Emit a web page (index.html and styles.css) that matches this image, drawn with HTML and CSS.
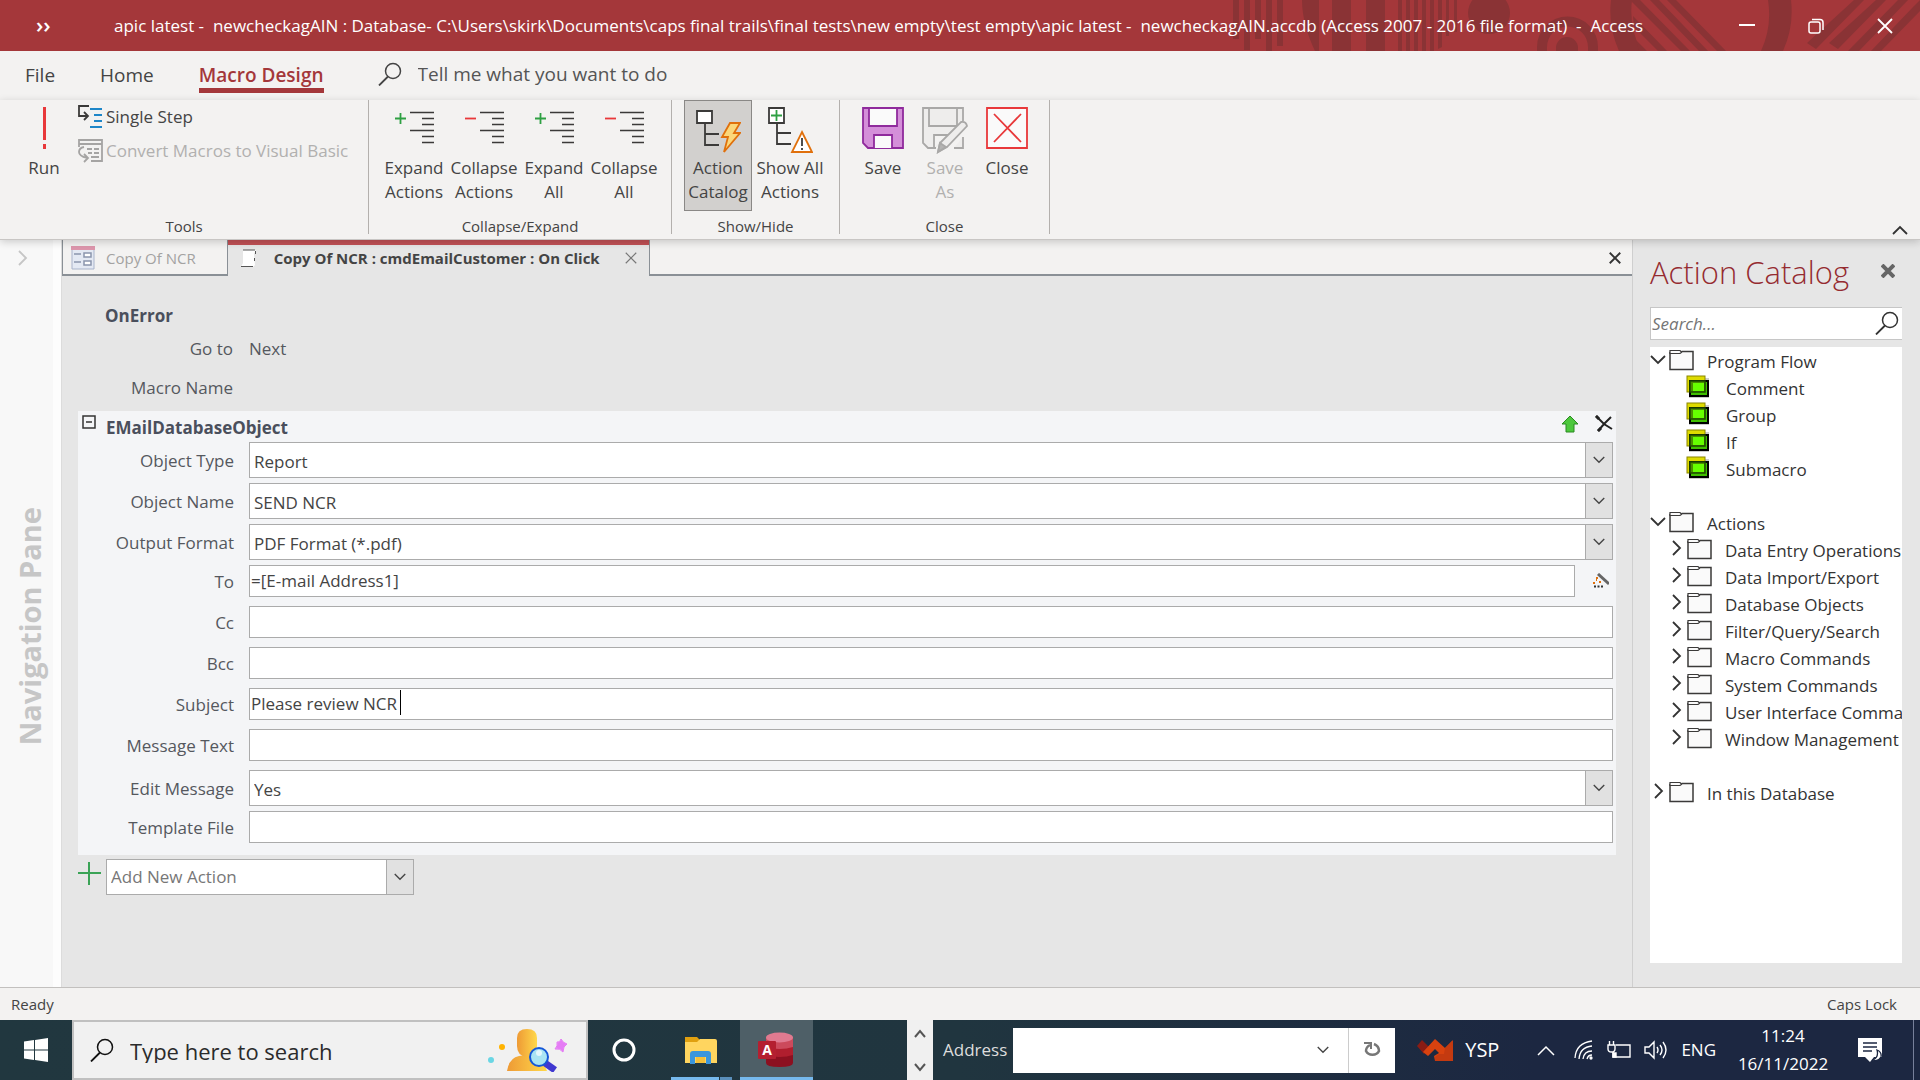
FILE: index.html
```html
<!DOCTYPE html>
<html lang="en">
<head>
    <meta charset="UTF-8">
    <meta name="viewport" content="width=device-width, initial-scale=1.0">
    <title>Access - Macro Design</title>
    <link rel="stylesheet" href="styles.css">
</head>
<body>
    <!-- shared icons -->
    <svg class="defs" width="0" height="0">
        <symbol id="i-lines" viewBox="0 0 41 42">
            <path d="M16 5.5h24M28 11.5h12M28 17.5h12M16 23.5h24M28 29.5h12M28 35.5h12" fill="none" stroke="#3b3a39" stroke-width="1.6"/>
        </symbol>
        <symbol id="i-folder" viewBox="0 0 25 22">
            <path d="M1 3.500H12L13 2.500H24V20.500H1Z" fill="#fafafa" stroke="#3b3a39" stroke-width="1.500"/>
            <path d="M1 1.500H11L12.500 3L11 4.500H1Z" fill="#fafafa" stroke="#3b3a39" stroke-width="1.200"/>
        </symbol>
        <symbol id="i-block" viewBox="0 0 24 24">
            <rect x="3" y="3" width="20" height="20" fill="#999" opacity=".5"/>
            <rect x="1" y="1" width="18" height="16" fill="#dedb00" stroke="#8a8600"/>
            <rect x="4" y="6" width="18" height="15" fill="#3fbf00" stroke="#000" stroke-width="2"/>
            <rect x="4" y="6" width="15" height="11" fill="#4a8f00" stroke="#1f4a00" stroke-width="1.500"/>
            <rect x="7" y="8" width="11" height="8" fill="#66ff00"/>
        </symbol>
        <symbol id="i-down" viewBox="0 0 16 10">
            <path d="M1 1l7 7 7-7" fill="none" stroke="currentColor" stroke-width="1.800"/>
        </symbol>
        <symbol id="i-right" viewBox="0 0 10 16">
            <path d="M1 1l7 7-7 7" fill="none" stroke="currentColor" stroke-width="1.800"/>
        </symbol>
        <symbol id="i-search" viewBox="0 0 24 24">
            <circle cx="15" cy="9" r="7.500" fill="none" stroke="currentColor" stroke-width="1.500"/>
            <path d="M10 14.500L1 23.500" stroke="currentColor" stroke-width="1.800"/>
        </symbol>
        <symbol id="i-cross" viewBox="0 0 16 16">
            <path d="M1 1l14 14M15 1L1 15" fill="none" stroke="currentColor"/>
        </symbol>
    </svg>

    <header class="titlebar">
        <svg class="pattern" width="700" height="51" viewBox="0 0 700 51" fill="#8a3335">
            <path d="M13 0h6v39h-6zM24 0h6v50h-6zM35 0h6v39h-6zM46 0h6v51h-6zM57 0h6v46h-6z"/>
            <path d="M82 0h17v51h-4C88 36 82 18 82 0zM112 0h19v51h-19zM146 0h19v51h-19z"/>
            <path d="M178 0h4v51h-4zM186 0h4v51h-4zM194 0h4v51h-4zM202 0h4v51h-4zM210 0h4v51h-4zM218 0h4v47l-4 2zM226 0h3v36h-3zM234 0h3v32h-3z"/>
            <circle cx="269" cy="13" r="21"/>
            <path d="M317 51v-4a30 30 0 0 1 61 0v4h-10v-4a20 20 0 0 0-41 0v4zM336 51v-3a11 11 0 0 1 22 0v3z"/>
            <path d="M391 0a96 96 0 0 0 8 51h22a88 88 0 0 1-9-51zM548 0a88 88 0 0 1-7 51h22a96 96 0 0 0 8-51z"/>
            <path d="M412 0h8l50 51h-9l-49-49zM430 0h9l49 51h-9zM447 0h9l50 51h-9zM413 16l34 35h-9L414 27zM416 40l11 11h-8z"/>
            <path d="M634 0h10l-48 49-9-6zM656 0h10l-48 49-9-6zM678 0h10l-49 51h-11zM694 6l6-6v11l-39 40h-10z"/>
        </svg>
        <button class="more" aria-label="More commands">&#8250;&#8250;</button>
        <h1>apic latest -&nbsp; newcheckagAIN : Database- C:\Users\skirk\Documents\caps final trails\final tests\new empty\test empty\apic latest -&nbsp; newcheckagAIN.accdb (Access 2007 - 2016 file format)&nbsp; -&nbsp; Access</h1>
        <div class="window-buttons">
            <button aria-label="Minimize"><svg width="16" height="16"><path d="M0 7h16" stroke="#fff" stroke-width="2"/></svg></button>
            <button aria-label="Restore"><svg width="16" height="16" fill="none" stroke="#fff" stroke-width="1.500"><rect x="1" y="4" width="11" height="11" rx="2"/><path d="M4 1.500h8q3 0 3 3V12"/></svg></button>
            <button aria-label="Close window"><svg width="16" height="16" stroke-width="1.800"><use href="#i-cross"/></svg></button>
        </div>
    </header>

    <nav class="ribbon-tabs">
        <a href="#">File</a>
        <a href="#">Home</a>
        <a href="#" class="active">Macro Design</a>
        <label class="tell-me">
            <svg width="24" height="24"><use href="#i-search"/></svg>
            <input type="text" placeholder="Tell me what you want to do">
        </label>
    </nav>

    <section class="ribbon">
        <div class="group tools">
            <div class="group-body">
                <button class="big run">
                    <svg width="41" height="42"><path d="M20.500 0v33M20.500 37v5" stroke="#e8383a" stroke-width="3"/></svg>
                    <span>Run</span>
                </button>
                <div class="small-buttons">
                    <button>
                        <svg width="25" height="24" fill="none" stroke-width="1.800"><path d="M11 1H1v10h8M6 7l4 4-4 4" stroke="#3b3a39"/><path d="M12 4h12M16 10h8M16 16h8M12 22h12" stroke="#1e86c8"/></svg>
                        Single Step
                    </button>
                    <button disabled>
                        <svg width="25" height="24" fill="none" stroke="#a5a4a3" stroke-width="1.800"><path d="M1 8V1h23v21H13M1 5h23M9 10h5M16 10h5M10 14h4M16 14h5M13 18h8"/><path d="M6 8q-5 1-5 5t8 6M6 15l4 4-4 4"/></svg>
                        Convert Macros to Visual Basic
                    </button>
                </div>
            </div>
            <div class="group-name">Tools</div>
        </div>
        <div class="group collapse">
            <div class="group-body">
                <button class="big">
                    <svg width="41" height="42"><use href="#i-lines" width="41" height="42"/><path d="M1 11.500h11M6.500 6v11" stroke="#2ea043" stroke-width="1.800"/></svg>
                    <span>Expand<br>Actions</span>
                </button>
                <button class="big">
                    <svg width="41" height="42"><use href="#i-lines" width="41" height="42"/><path d="M1 11.500h11" stroke="#e8383a" stroke-width="1.800"/></svg>
                    <span>Collapse<br>Actions</span>
                </button>
                <button class="big">
                    <svg width="41" height="42"><use href="#i-lines" width="41" height="42"/><path d="M1 11.500h11M6.500 6v11" stroke="#2ea043" stroke-width="1.800"/></svg>
                    <span>Expand<br>All</span>
                </button>
                <button class="big">
                    <svg width="41" height="42"><use href="#i-lines" width="41" height="42"/><path d="M1 11.500h11" stroke="#e8383a" stroke-width="1.800"/></svg>
                    <span>Collapse<br>All</span>
                </button>
            </div>
            <div class="group-name">Collapse/Expand</div>
        </div>
        <div class="group show-hide">
            <div class="group-body">
                <button class="big pressed">
                    <svg width="46" height="46" fill="none"><path d="M2 4h15v12H2zM10 16v22h14M10 27h14" stroke="#3b3a39" stroke-width="1.800"/><path d="M3 5h13v10H3z" fill="#fff"/><path d="M35 16h10l-6 10h6L29 45l4-15h-6z" fill="#fbd77a" stroke="#e0700c" stroke-width="1.800"/></svg>
                    <span>Action<br>Catalog</span>
                </button>
                <button class="big">
                    <svg width="46" height="46" fill="none"><path d="M2 1h15v15H2z" fill="#fff" stroke="#3b3a39" stroke-width="1.800"/><path d="M10 16v21h14M10 26h14" stroke="#3b3a39" stroke-width="1.800"/><path d="M4 8.500h11M9.500 3v11" stroke="#2ea043" stroke-width="1.800"/><path d="M35 25l10 20H25z" fill="#fff" stroke="#e0700c" stroke-width="1.800"/><path d="M35 31v8M35 41v2" stroke="#222" stroke-width="1.600"/></svg>
                    <span>Show All<br>Actions</span>
                </button>
            </div>
            <div class="group-name">Show/Hide</div>
        </div>
        <div class="group close-group">
            <div class="group-body">
                <button class="big">
                    <svg width="42" height="42" stroke="#8f2a9c" stroke-width="1.800"><path d="M1 1h40v40H6l-5-5z" fill="#d48fd9"/><path d="M7 1h28v18H7zM12 41V28h18v13" fill="#fafafa"/></svg>
                    <span>Save</span>
                </button>
                <button class="big" disabled>
                    <svg width="46" height="46" stroke="#a9a8a7" stroke-width="1.800" fill="none"><path d="M41 14V1H1v35l5 5h8M7 1v18h28V1M12 41V28h14M41 30v11h-9" fill="#eeedec"/><path d="M16 45l2-9 21-21q5-1 6 4L25 40z" fill="#eeedec"/><path d="M16 45l2-9 6 4z" fill="#b5b4b3"/></svg>
                    <span>Save<br>As</span>
                </button>
                <button class="big">
                    <svg width="42" height="42" stroke="#e8383a" stroke-width="1.800" fill="none"><path d="M1 1h40v40H1z" fill="#fafafa"/><path d="M8 7l27 28M35 7L8 35"/></svg>
                    <span>Close</span>
                </button>
            </div>
            <div class="group-name">Close</div>
        </div>
        <button class="collapse-ribbon" aria-label="Collapse the ribbon"><svg width="16" height="10"><path d="M1 9l7-7 7 7" fill="none" stroke="#333" stroke-width="1.800"/></svg></button>
    </section>

    <div class="workspace">
        <aside class="nav-pane">
            <button aria-label="Open navigation pane"><svg width="10" height="16"><use href="#i-right"/></svg></button>
            <span>Navigation Pane</span>
        </aside>

        <main>
            <div class="doc-tabs">
                <a href="#" class="doc-tab">
                    <svg width="24" height="24"><path d="M1 1h22v22H1z" fill="#e4e9f3" stroke="#a9b3ca"/><path d="M0 0h24v4H0z" fill="#dd96ac"/><path d="M3 8h7M3 16h7" stroke="#8b95ad" stroke-width="1.500"/><path d="M13 7h7v4h-7zM13 15h7v4h-7z" fill="#fff" stroke="#8b95ad" stroke-width="1.500"/></svg>
                    Copy Of NCR
                </a>
                <a href="#" class="doc-tab current">
                    <svg width="18" height="20"><path d="M3 2h13l-2 4 1 11-2 2H1l2-4z" fill="#fff"/><path d="M3 2h12M1 18.500h12M15.500 3v3M14.500 10v3" stroke="#555"/></svg>
                    Copy Of NCR : cmdEmailCustomer : On Click
                    <svg class="tab-x" width="12" height="12" stroke-width="1.500"><use href="#i-cross"/></svg>
                </a>
                <button class="doc-close" aria-label="Close document"><svg width="12" height="12" stroke-width="2.500"><use href="#i-cross"/></svg></button>
            </div>

            <div class="macro">
                <h2 class="action-name">OnError</h2>
                <dl class="on-error">
                    <dt>Go to</dt><dd>Next</dd>
                    <dt>Macro Name</dt><dd></dd>
                </dl>

                <form class="action-block">
                    <div class="block-head">
                        <button type="button" class="toggle" aria-label="Collapse action"><svg width="14" height="14"><path d="M1 1h12v12H1zM4 7h6" fill="none" stroke="#333" stroke-width="1.500"/></svg></button>
                        <h2 class="action-name">EMailDatabaseObject</h2>
                        <button type="button" aria-label="Move up"><svg width="18" height="18"><path d="M9 1l8 8h-4v8H5V9H1z" fill="#4cc83c" stroke="#2b8a22"/></svg></button>
                        <button type="button" aria-label="Delete"><svg width="18" height="18"><path d="M1 1l8 8 8 5M16 2L9 9l-6 7" fill="none" stroke="#222" stroke-width="2"/><path d="M1 1l3 3M6 13l-3 3" stroke="#222" stroke-width="3"/></svg></button>
                    </div>
                    <div class="row combo">
                        <label for="objectType">Object Type</label>
                        <div class="field"><select id="objectType"><option>Report</option></select><span class="arrow"><svg width="12" height="8"><use href="#i-down"/></svg></span></div>
                    </div>
                    <div class="row combo">
                        <label for="objectName">Object Name</label>
                        <div class="field"><select id="objectName"><option>SEND NCR</option></select><span class="arrow"><svg width="12" height="8"><use href="#i-down"/></svg></span></div>
                    </div>
                    <div class="row combo">
                        <label for="outputFormat">Output Format</label>
                        <div class="field"><select id="outputFormat"><option>PDF Format (*.pdf)</option></select><span class="arrow"><svg width="12" height="8"><use href="#i-down"/></svg></span></div>
                    </div>
                    <div class="row">
                        <label for="to">To</label>
                        <div class="field"><input type="text" id="to" value="=[E-mail Address1]"><button type="button" class="builder" aria-label="Expression builder"><svg width="16" height="16"><path d="M5 1l11 10" stroke="#666" stroke-width="3"/><path d="M1 13.500h2M4.500 13.500h2M8 13.500h2" stroke="#333" stroke-width="2"/><path d="M3 5h2M0 10h2M6 9h2M3 7h1" stroke="#e0700c" stroke-width="2"/></svg></button></div>
                    </div>
                    <div class="row">
                        <label for="cc">Cc</label>
                        <div class="field"><input type="text" id="cc"></div>
                    </div>
                    <div class="row">
                        <label for="bcc">Bcc</label>
                        <div class="field"><input type="text" id="bcc"></div>
                    </div>
                    <div class="row">
                        <label for="subject">Subject</label>
                        <div class="field"><input type="text" id="subject" value="Please review NCR "><span class="caret"></span></div>
                    </div>
                    <div class="row">
                        <label for="message">Message Text</label>
                        <div class="field"><input type="text" id="message"></div>
                    </div>
                    <div class="row combo">
                        <label for="editMessage">Edit Message</label>
                        <div class="field"><select id="editMessage"><option>Yes</option></select><span class="arrow"><svg width="12" height="8"><use href="#i-down"/></svg></span></div>
                    </div>
                    <div class="row">
                        <label for="template">Template File</label>
                        <div class="field"><input type="text" id="template"></div>
                    </div>
                </form>

                <div class="add-action">
                    <svg width="24" height="24"><path d="M0 11h23M11 0v23" stroke="#3aa356" stroke-width="2"/></svg>
                    <div class="field"><select aria-label="Add New Action"><option>Add New Action</option></select><span class="arrow"><svg width="12" height="8"><use href="#i-down"/></svg></span></div>
                </div>
            </div>
        </main>

        <aside class="catalog">
            <div class="catalog-head">
                <h2>Action Catalog</h2>
                <button aria-label="Close Action Catalog"><svg width="14" height="14"><path d="M1 1l12 12M13 1L1 13" stroke="#666" stroke-width="4"/></svg></button>
            </div>
            <label class="catalog-search">
                <input type="text" placeholder="Search...">
                <svg width="24" height="24"><use href="#i-search"/></svg>
            </label>
            <ul class="tree">
                <li><svg class="chev" width="16" height="10"><use href="#i-down"/></svg><svg width="25" height="22"><use href="#i-folder"/></svg>Program Flow</li>
                <li class="leaf"><svg width="24" height="24"><use href="#i-block"/></svg>Comment</li>
                <li class="leaf"><svg width="24" height="24"><use href="#i-block"/></svg>Group</li>
                <li class="leaf"><svg width="24" height="24"><use href="#i-block"/></svg>If</li>
                <li class="leaf"><svg width="24" height="24"><use href="#i-block"/></svg>Submacro</li>
                <li class="gap"><svg class="chev" width="16" height="10"><use href="#i-down"/></svg><svg width="25" height="22"><use href="#i-folder"/></svg>Actions</li>
                <li class="child"><svg class="chev closed" width="16" height="16"><use href="#i-right"/></svg><svg width="25" height="22"><use href="#i-folder"/></svg>Data Entry Operations</li>
                <li class="child"><svg class="chev closed" width="16" height="16"><use href="#i-right"/></svg><svg width="25" height="22"><use href="#i-folder"/></svg>Data Import/Export</li>
                <li class="child"><svg class="chev closed" width="16" height="16"><use href="#i-right"/></svg><svg width="25" height="22"><use href="#i-folder"/></svg>Database Objects</li>
                <li class="child"><svg class="chev closed" width="16" height="16"><use href="#i-right"/></svg><svg width="25" height="22"><use href="#i-folder"/></svg>Filter/Query/Search</li>
                <li class="child"><svg class="chev closed" width="16" height="16"><use href="#i-right"/></svg><svg width="25" height="22"><use href="#i-folder"/></svg>Macro Commands</li>
                <li class="child"><svg class="chev closed" width="16" height="16"><use href="#i-right"/></svg><svg width="25" height="22"><use href="#i-folder"/></svg>System Commands</li>
                <li class="child"><svg class="chev closed" width="16" height="16"><use href="#i-right"/></svg><svg width="25" height="22"><use href="#i-folder"/></svg>User Interface Comma</li>
                <li class="child"><svg class="chev closed" width="16" height="16"><use href="#i-right"/></svg><svg width="25" height="22"><use href="#i-folder"/></svg>Window Management</li>
                <li class="gap"><svg class="chev closed" width="16" height="16"><use href="#i-right"/></svg><svg width="25" height="22"><use href="#i-folder"/></svg>In this Database</li>
            </ul>
        </aside>
    </div>

    <div class="statusbar">
        <span>Ready</span>
        <span>Caps Lock</span>
    </div>

    <footer class="taskbar">
        <button class="start" aria-label="Start"><svg width="24" height="24" fill="#fff"><path d="M0 3.500L10 2v9.500H0zM11 2l13-2v11.500H11zM0 12.500h10V22L0 20.500zM11 12.500h13V24l-13-2z"/></svg></button>
        <label class="task-search">
            <svg width="24" height="24"><use href="#i-search"/></svg>
            <input type="text" placeholder="Type here to search">
            <svg width="80" height="44" viewBox="0 0 80 44">
                <defs>
                    <linearGradient id="gold" x1="0" x2="1"><stop offset="0" stop-color="#ee9a35"/><stop offset="1" stop-color="#ffd84a"/></linearGradient>
                </defs>
                <circle cx="14" cy="19" r="3" fill="#ffb300"/>
                <circle cx="3" cy="32" r="3" fill="#6ad6e4"/>
                <path d="M19 43q2-13 12-15 9-2 17 2 8 3 11 13z" fill="url(#gold)"/>
                <path d="M29 10q0-9 10-9t10 9v8q-1 11-10 11-10-1-10-11z" fill="url(#gold)"/>
                <path d="M57 35l10 7" stroke="#4038d0" stroke-width="7"/>
                <circle cx="51" cy="29" r="9" fill="#a9e4f3" stroke="#1457d8" stroke-width="2"/>
                <circle cx="51" cy="25" r="3" fill="#e3f8fd"/>
                <path d="M73 11q2 4 6 5-4 2-4 8-3-4-8-3 3-3 2-7 3 1 4-3z" fill="#e57cf5" stroke="#e57cf5" stroke-linejoin="round"/>
            </svg>
        </label>
        <button class="task cortana" aria-label="Cortana"><svg width="24" height="24"><circle cx="12" cy="12" r="10" fill="none" stroke="#fff" stroke-width="3"/></svg></button>
        <button class="task open" aria-label="File Explorer"><svg width="32" height="28"><path d="M0 1h12l3 3h15v8H0z" fill="#e0a010"/><path d="M0 6h12l3-3h15q2 0 2 2v22H0z" fill="#ffd55f"/><path d="M5 28V18q0-3 3-3h15q3 0 3 3v10h-5v-7H10v7z" fill="#3a96dd"/><path d="M11 21h9v6h-9z" fill="#f5c03a"/></svg></button>
        <button class="task running" aria-label="Access"><svg width="36" height="36"><path d="M8 5v26q0 4 13.500 4T35 31V5z" fill="#8c1020"/><path d="M8 5v18q6 2 13.500 2T35 23V5z" fill="#b01e2e"/><path d="M8 5v10q6 2 13.500 2T35 15V5z" fill="#cc4a5c"/><ellipse cx="21.500" cy="5.500" rx="13.500" ry="5" fill="#e07a90"/><rect x="0" y="9" width="18" height="18" rx="1" fill="#b41f30"/><text x="9" y="23" text-anchor="middle" font-family="Open Sans" font-weight="700" font-size="14" fill="#fff">A</text></svg></button>
        <div class="task-scroll">
            <button aria-label="Scroll up"><svg width="12" height="9"><path d="M1 8l5-6 5 6" fill="none" stroke="#555" stroke-width="2"/></svg></button>
            <button aria-label="Scroll down"><svg width="12" height="9"><path d="M1 1l5 6 5-6" fill="none" stroke="#555" stroke-width="2"/></svg></button>
        </div>
        <div class="address">
            <label for="address">Address</label>
            <input type="text" id="address">
            <button aria-label="Previous addresses"><svg width="12" height="8"><use href="#i-down"/></svg></button>
            <button class="refresh" aria-label="Refresh"><svg width="18" height="18"><path d="M11 3q5 2 5 7a7 6 0 0 1-13 0q0-4 4-6" fill="none" stroke="#777" stroke-width="2.500"/><path d="M1 2h7v6" fill="none" stroke="#777" stroke-width="2"/></svg></button>
        </div>
        <button class="ysp"><svg width="36" height="22"><path d="M0 7l5-6 7 7-5 7z" fill="#8a1c14"/><path d="M6 13L18 0l10 9 7-7v20H18l-1-5 5-3-4-4-7 7z" fill="#d8420f"/><path d="M28 9l8-8v21H18v-4l4-3h5z" fill="#c43a10"/></svg>YSP</button>
        <div class="tray">
            <button aria-label="Show hidden icons"><svg width="18" height="11"><path d="M1 10l8-8 8 8" fill="none" stroke="#fff" stroke-width="1.500"/></svg></button>
            <button aria-label="Network"><svg width="20" height="20" fill="none" stroke="#fff" stroke-width="1.300"><path d="M1 18Q2 3 18 1M5 19Q6 7 18 6M9 19q1-8 9-8M13 19q1-4 5-4"/><circle cx="17" cy="18" r="1" fill="#fff"/></svg></button>
            <button aria-label="Power"><svg width="24" height="18" fill="none" stroke="#fff" stroke-width="1.400"><path d="M9 4h14v12H6v-5"/><path d="M1 4h7v4q0 3-3.500 3T1 8zM2.500 0v4M6.500 0v4"/><path d="M6 12h3v4H6z" fill="#fff"/></svg></button>
            <button aria-label="Volume"><svg width="24" height="20" fill="none" stroke="#fff" stroke-width="1.400"><path d="M1 7h4l5-5v16l-5-5H1zM13 7q2 3 0 6M16 5q4 5 0 10M19 2q6 8 0 16"/></svg></button>
            <button class="lang">ENG</button>
        </div>
        <div class="clock"><span>11:24</span><span>16/11/2022</span></div>
        <button class="notify" aria-label="Notifications"><svg width="25" height="24"><path d="M0 0h24v19h-8l-4 5-5-5H0z" fill="#fff"/><path d="M5 5h14M5 9h14M5 13h9" stroke="#1c2741" stroke-width="1.300"/><path d="M19 12q5 2 4 7-3 5-8 3 6-3 4-10z" fill="#fff" stroke="#1c2741" stroke-width="1.300"/></svg></button>
    </footer>
</body>
</html>
```
FILE: styles.css
```css
* {
    box-sizing: border-box;
}
body {
    margin: 0;
    min-height: 100vh;
    display: flex;
    flex-direction: column;
    font-family: "Open Sans", "Noto Sans", sans-serif;
    font-size: 17px;
    line-height: 24px;
    color: #444;
    background-color: #e6e6e6;
    overflow-x: hidden;
}
button, input, select {
    font: inherit;
    color: inherit;
    border: none;
    background: none;
    padding: 0;
    margin: 0;
    border-radius: 0;
}
input:focus, select:focus {
    outline: none;
}
a {
    color: inherit;
    text-decoration: none;
}
h1, h2, ul, dl, dd {
    margin: 0;
    padding: 0;
    font-weight: normal;
}
svg {
    flex: none;
    display: block;
}
.defs {
    position: absolute;
}

/* title bar */
.titlebar {
    position: relative;
    display: flex;
    align-items: center;
    height: 51px;
    background-color: #a4373a;
    color: #fff;
}
.pattern {
    position: absolute;
    top: 0;
    right: 0;
}
.more {
    width: 114px;
    padding: 0 0 4px 36px;
    text-align: left;
    font-size: 22px;
    font-weight: 600;
}
.titlebar h1 {
    position: relative;
    flex: 1;
    font-size: 17px;
    padding-top: 1px;
    white-space: nowrap;
}
.window-buttons {
    position: relative;
    display: flex;
    padding-right: 1px;
}
.window-buttons button {
    width: 69px;
    display: flex;
    justify-content: center;
}

/* ribbon */
.ribbon-tabs {
    display: flex;
    align-items: flex-start;
    height: 49px;
    padding: 12px 0 0 25px;
    background-color: #f3f2f1;
    font-size: 19px;
}
.ribbon-tabs a {
    margin-right: 45px;
    height: 30px;
}
.ribbon-tabs .active {
    margin-right: 54px;
    color: #a4373a;
    font-weight: 600;
    border-bottom: 5px solid #a4373a;
}
.tell-me {
    display: flex;
    gap: 16px;
    margin-top: -1px;
}
.tell-me input {
    width: 300px;
}
.tell-me input::placeholder {
    color: #555;
    opacity: 1;
}
.ribbon {
    display: flex;
    height: 140px;
    background-color: #f3f2f1;
    border-bottom: 1px solid #c8c6c4;
    position: relative;
    z-index: 1;
    box-shadow: 0 2px 8px rgba(0, 0, 0, 0.18);
}
.group {
    display: flex;
    flex-direction: column;
    justify-content: space-between;
    height: 134px;
    border-right: 1px solid #b3b0ad;
}
.group-body {
    display: flex;
    padding-left: 10px;
}
.group-name {
    text-align: center;
    font-size: 15px;
    line-height: 20px;
    height: 18px;
}
.big {
    display: flex;
    flex-direction: column;
    align-items: center;
    height: 111px;
    padding-top: 7px;
    line-height: 24px;
    font-size: 17px;
}
.big svg {
    height: 49px;
}
.big:disabled, .small-buttons button:disabled {
    color: #b1b0af;
}
.tools {
    width: 369px;
}
.run {
    width: 68px;
}
.small-buttons button {
    display: flex;
    align-items: center;
    gap: 3px;
    height: 34px;
    white-space: nowrap;
}
.collapse {
    width: 303px;
}
.collapse .big {
    width: 70px;
}
.show-hide {
    width: 168px;
}
.show-hide .group-body, .close-group .group-body {
    padding-left: 12px;
}
.show-hide .big {
    width: 68px;
}
.show-hide .pressed {
    background-color: #d2d0ce;
    outline: 1px solid #8a8886;
    outline-offset: -1px;
}
.show-hide .big + .big {
    width: 76px;
}
.close-group {
    width: 210px;
}
.close-group .big {
    width: 62px;
}
.collapse-ribbon {
    margin: 0 12px 4px auto;
    align-self: flex-end;
}

/* workspace */
.workspace {
    flex: 1;
    display: flex;
}
.nav-pane {
    width: 62px;
    display: flex;
    flex-direction: column;
    align-items: center;
    padding-right: 2px;
    background-color: #f8f8f8;
    border-right: 1px solid #dcdcdc;
    box-shadow: inset -8px 0 0 #fdfdfd;
    color: #c6c6c6;
}
.nav-pane button {
    padding: 10px 14px 0 0;
}
.nav-pane span {
    margin: auto;
    writing-mode: vertical-rl;
    transform: rotate(180deg);
    font-size: 29px;
    line-height: 58px;
    font-weight: 700;
}
main {
    flex: 1;
    min-width: 0;
}
.doc-tabs {
    display: flex;
    height: 36px;
    background-color: #f3f2f1;
    box-shadow: inset 0 -2px 0 #8a9096;
}
.doc-tab {
    display: flex;
    align-items: center;
    gap: 11px;
    padding: 0 31px 0 8px;
    font-size: 15px;
    color: #a3a2a1;
    border: 1px solid #8a9096;
    border-top: none;
}
.doc-tab.current {
    padding: 0 12px;
    gap: 16px;
    font-weight: 700;
    color: #444;
    background-color: #e6e6e6;
    border-width: 0 1px 0 0;
    box-shadow: inset 0 5px 0 #c05055;
}
.tab-x {
    margin-left: 9px;
    color: #777;
}
.doc-close {
    margin: 0 11px 0 auto;
    color: #333;
}
.macro {
    padding: 28px 16px 0 16px;
    color: #55585e;
}
.action-name {
    font-size: 17px;
    font-weight: 700;
    line-height: 24px;
    color: #4a4f5c;
}
.macro > .action-name {
    padding-left: 27px;
}
.on-error {
    display: grid;
    grid-template-columns: 155px 1fr;
    column-gap: 16px;
    row-gap: 15px;
    padding: 9px 0 11px;
}
.on-error dt {
    text-align: right;
}
.action-block {
    padding: 0 3px 3px 0;
    background-color: #f4f5f7;
}
.block-head {
    display: flex;
    align-items: flex-start;
    height: 31px;
    padding: 4px 0 0 4px;
    gap: 16px;
}
.block-head .toggle {
    margin-right: -6px;
}
.block-head .action-name {
    flex: 1;
    padding-top: 1px;
}
.row {
    display: flex;
    height: 41px;
    line-height: 34px;
}
.row.combo {
    line-height: 38px;
}
.row label {
    width: 156px;
    margin-right: 15px;
    text-align: right;
}
.field {
    position: relative;
    flex: 1;
    display: flex;
    align-items: flex-start;
    color: #444;
}
.field input {
    flex: 1;
    min-width: 0;
    height: 32px;
    padding: 0 1px;
    background-color: #fff;
    border: 1px solid #ababab;
}
.field select {
    appearance: none;
    flex: 1;
    height: 36px;
    padding: 0 4px 2px;
    background-color: #fff;
    border: 1px solid #ababab;
}
.arrow {
    position: absolute;
    right: 0;
    top: 0;
    width: 28px;
    height: 36px;
    display: flex;
    align-items: center;
    justify-content: center;
    background-color: #e1e1e1;
    border: 1px solid #ababab;
    pointer-events: none;
}
.builder {
    margin: 8px 4px 0 18px;
}
.caret {
    position: absolute;
    left: 151px;
    top: 2px;
    width: 1px;
    height: 25px;
    background-color: #000;
}
.add-action {
    display: flex;
    gap: 4px;
    padding-top: 4px;
}
.add-action > svg {
    margin-top: 3px;
}
.add-action .field {
    flex: none;
    width: 308px;
}
.add-action .field select {
    padding-bottom: 0;
    color: #777;
}

/* action catalog */
.catalog {
    width: 288px;
    display: flex;
    flex-direction: column;
    padding: 12px 18px 24px 17px;
    border-left: 1px solid #cfcfcf;
}
.catalog-head {
    display: flex;
    justify-content: space-between;
    height: 55px;
    padding: 0 7px 0 0;
    color: #952b30;
}
.catalog-head h2 {
    font-size: 31px;
    line-height: 40px;
    font-weight: 300;
    white-space: nowrap;
}
.catalog-head button {
    height: 38px;
}
.catalog-search {
    display: flex;
    height: 33px;
    padding-right: 3px;
    margin-bottom: 7px;
    background-color: #fff;
    border: 1px solid #c6c6c6;
    border-right: none;
    color: #333;
}
.catalog-search input {
    flex: 1;
    min-width: 0;
    padding: 0 1px;
    font-style: italic;
}
.catalog-search svg {
    margin-top: 3px;
}
.tree {
    flex: 1;
    list-style: none;
    padding-top: 2px;
    background-color: #fff;
    color: #333;
    overflow: hidden;
}
.tree li {
    display: flex;
    height: 27px;
    line-height: 25px;
    white-space: nowrap;
}
.tree li svg + svg {
    margin: 0 13px 0 3px;
}
.tree li .chev {
    margin: 6px 0 0 0;
}
.tree .leaf {
    padding-left: 36px;
    gap: 16px;
}
.tree .leaf svg {
    margin-top: -1px;
}
.tree .child {
    padding-left: 18px;
}
.tree li .closed {
    margin: 2px -1px 0 1px;
}
.tree .gap {
    margin-top: 27px;
}

/* status bar */
.statusbar {
    display: flex;
    justify-content: space-between;
    height: 33px;
    padding: 0 23px 0 11px;
    font-size: 15px;
    line-height: 33px;
    background-color: #f3f2f1;
    border-top: 1px solid #c2c0be;
}

/* taskbar */
.taskbar {
    display: flex;
    height: 60px;
    background: linear-gradient(90deg, #21373f, #20353f 50%, #1c2741 80%);
    color: #fff;
}
.start {
    width: 72px;
    display: flex;
    align-items: center;
    justify-content: center;
}
.task-search {
    display: flex;
    align-items: center;
    width: 516px;
    padding: 0 18px 0 16px;
    gap: 16px;
    font-size: 22px;
    color: #111;
    background-color: #f1f1f1;
    border: 2px solid #c0c0c0;
}
.task-search input {
    flex: 1;
    min-width: 0;
    padding-top: 2px;
}
.task-search input::placeholder {
    color: #2b2b2b;
    opacity: 1;
}
.task {
    display: flex;
    align-items: center;
    justify-content: center;
    width: 73px;
}
.task.cortana {
    width: 72px;
}
.task.open {
    width: 61px;
    margin: 0 8px 0 11px;
    padding-right: 2px;
    background: linear-gradient(#76b9ed, #76b9ed) 0 57px / 48px 3px no-repeat, linear-gradient(#5a8fbb, #5a8fbb) 49px 57px / 12px 3px no-repeat;
}
.task.running {
    padding-right: 2px;
    background-color: #4e5f67;
    box-shadow: inset 0 -3px 0 #76b9ed;
}
.task-scroll {
    display: flex;
    flex-direction: column;
    justify-content: space-between;
    align-items: center;
    width: 26px;
    margin-left: 94px;
    padding: 9px 0 8px;
    background-color: #f0f0f0;
}
.address {
    display: flex;
    align-items: center;
    flex: 1;
    padding-left: 10px;
    color: #ddd;
}
.address input {
    flex: 1;
    min-width: 0;
    height: 45px;
    margin-left: 6px;
    background-color: #fff;
}
.address button {
    width: 51px;
    height: 45px;
    display: flex;
    align-items: center;
    justify-content: center;
    background-color: #fff;
    color: #444;
}
.address .refresh {
    width: 47px;
    border-left: 1px solid #ccc;
}
.ysp {
    display: flex;
    align-items: center;
    gap: 12px;
    padding: 0 38px 0 22px;
    font-size: 20px;
    color: #fff;
}
.tray {
    display: flex;
    align-items: center;
    gap: 13px;
}
.tray button:first-child {
    margin-right: 6px;
}
.clock {
    display: flex;
    flex-direction: column;
    justify-content: center;
    width: 134px;
    text-align: center;
    line-height: 28px;
}
.notify {
    width: 64px;
    padding-left: 8px;
    border-right: 1px solid #76809a;
    margin-right: 6px;
}
```
